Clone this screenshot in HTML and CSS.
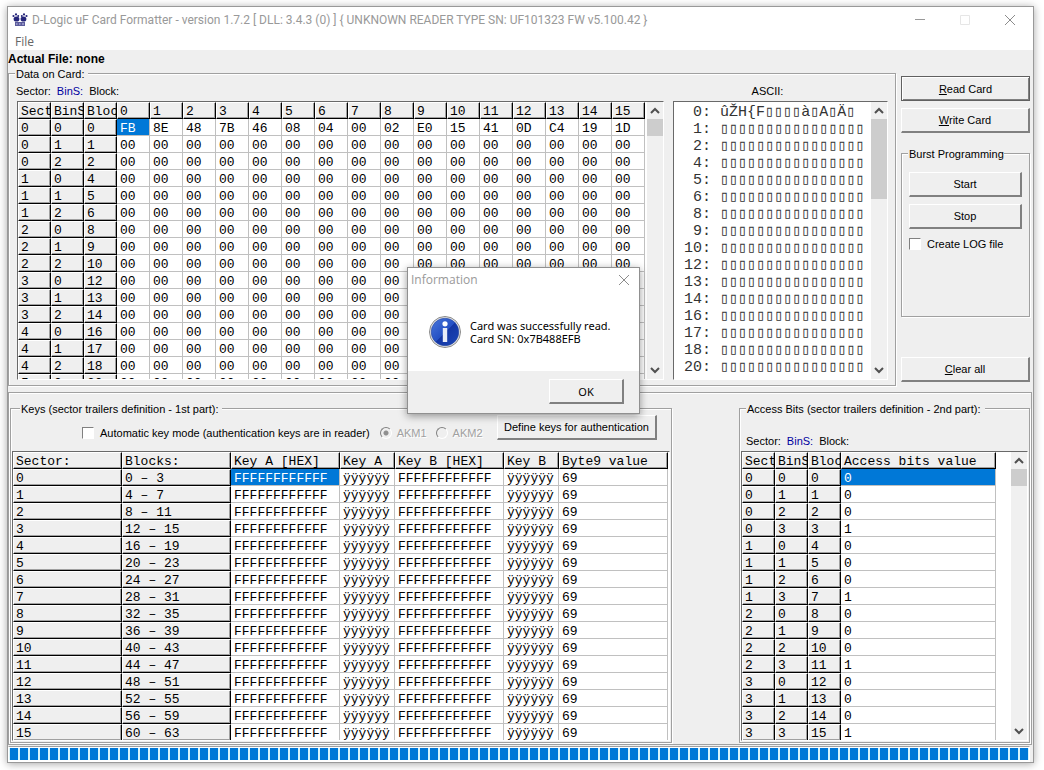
FILE: index.html
```html
<!DOCTYPE html>
<html lang="en">
<head>
<meta charset="utf-8">
<title>D-Logic uF Card Formatter</title>
<link rel="stylesheet" href="styles.css">
</head>
<body>
<div class="window">
  <header class="titlebar">
    <svg class="app-icon" width="16" height="14" viewBox="0 0 16 14" aria-hidden="true">
      <g fill="#25257a">
        <circle cx="1.500" cy="3" r="1.100"/><circle cx="4" cy="1.400" r="1.100"/><circle cx="6.200" cy="3" r="1"/>
        <circle cx="14.500" cy="3" r="1.100"/><circle cx="12" cy="1.400" r="1.100"/><circle cx="9.800" cy="3" r="1"/>
        <ellipse cx="4.500" cy="6" rx="2.900" ry="2.600"/><ellipse cx="11.500" cy="6" rx="2.900" ry="2.600"/>
        <path d="M3 9h10v4H3z" opacity=".75"/>
      </g>
      <path d="M4 11h1.500M7 11h1.500M10 11h2" stroke="#c8c8f0"/>
    </svg>
    <h1 class="title">D-Logic uF Card Formatter - version 1.7.2 [ DLL: 3.4.3 (0) ] { UNKNOWN READER TYPE SN: UF101323 FW v5.100.42 }</h1>
    <div class="caption-buttons">
      <button class="caption" aria-label="Minimize"><svg width="12" height="12"><path d="M1 5.500h10" stroke="#999"/></svg></button>
      <button class="caption" aria-label="Maximize" disabled><svg width="12" height="12"><path d="M1.500 1.500h9v9h-9z" fill="none" stroke="#e6e6e6"/></svg></button>
      <button class="caption" aria-label="Close"><svg width="12" height="12"><path d="M1 1l10 10M11 1L1 11" stroke="#8c8c8c"/></svg></button>
    </div>
  </header>
  <nav class="menu"><button class="menu-item">File</button></nav>

  <main class="client">
    <p class="file-name">Actual File: none</p>
    <div class="upper">
      <fieldset class="group data-group">
        <legend>Data on Card:</legend>
        <div class="captions">
          <div class="triple"><span>Sector:</span><span class="blue">BinS:</span><span>Block:</span></div>
          <div class="ascii-label">ASCII:</div>
        </div>
        <div class="views">
          <div class="view data-view">
            <div class="pane"><table class="grid" id="data"></table></div>
            <div class="scroll"></div>
          </div>
          <div class="view ascii-view">
            <pre class="ascii" id="ascii"></pre>
            <div class="scroll long"></div>
          </div>
        </div>
      </fieldset>
      <aside class="side">
        <button class="btn default"><u>R</u>ead Card</button>
        <button class="btn"><u>W</u>rite Card</button>
        <fieldset class="group burst">
          <legend>Burst Programming</legend>
          <button class="btn">Start</button>
          <button class="btn">Stop</button>
          <label class="check"><input type="checkbox"><span>Create LOG file</span></label>
        </fieldset>
        <button class="btn clear"><u>C</u>lear all</button>
      </aside>
    </div>

    <section class="lower">
      <fieldset class="group keys">
        <legend>Keys (sector trailers definition - 1st part):</legend>
        <div class="key-options">
          <label class="check"><input type="checkbox"><span>Automatic key mode (authentication keys are in reader)</span></label>
          <label class="check off akm"><input type="radio" name="akm" checked disabled><span>AKM1</span></label>
          <label class="check off"><input type="radio" name="akm" disabled><span>AKM2</span></label>
          <button class="btn define">Define keys for authentication</button>
        </div>
        <div class="view"><div class="pane"><table class="grid" id="keys"></table></div></div>
      </fieldset>
      <fieldset class="group access">
        <legend>Access Bits (sector trailers definition - 2nd part):</legend>
        <div class="triple"><span>Sector:</span><span class="blue">BinS:</span><span>Block:</span></div>
        <div class="view">
          <div class="pane"><table class="grid" id="access"></table></div>
          <div class="scroll"></div>
        </div>
      </fieldset>
    </section>
    <div class="progress" role="progressbar" aria-label="Progress" aria-valuenow="100"></div>
  </main>

  <section class="dialog" role="dialog" aria-labelledby="dialog-title">
    <div class="dialog-head">
      <h2 id="dialog-title">Information</h2>
      <button class="caption" aria-label="Close dialog"><svg width="12" height="12"><path d="M1 1l10 10M11 1L1 11" stroke="#8c8c8c"/></svg></button>
    </div>
    <div class="dialog-body">
      <svg width="34" height="34" viewBox="0 0 34 34" aria-hidden="true">
        <defs><linearGradient id="ball" x1="0" y1="0" x2="1" y2="1"><stop offset="0" stop-color="#4a78dc"/><stop offset=".5" stop-color="#2450c4"/><stop offset=".52" stop-color="#1436a4"/><stop offset="1" stop-color="#1c48b8"/></linearGradient></defs>
        <circle cx="17" cy="17" r="15.500" fill="#e8e8e8" stroke="#8a8a8a"/>
        <circle cx="17" cy="17" r="13.800" fill="url(#ball)" stroke="#2444a0" stroke-width=".6"/>
        <circle cx="17" cy="8.800" r="2.600" fill="#fff"/>
        <path d="M14.800 13h4.400v14h-4.400z" fill="#e8ecf8"/>
      </svg>
      <p>Card was successfully read.<br>Card SN: 0x7B488EFB</p>
    </div>
    <div class="dialog-foot"><button class="btn">OK</button></div>
  </section>
</div>
<script src="app.js"></script>
</body>
</html>
```
FILE: styles.css
```css
* { box-sizing: border-box; }
body {
  margin: 0;
  padding: 6px 10px 7px 7px;
  background: #fff;
  color: #000;
  font: 11px/14px "Liberation Sans", Arial, sans-serif;
}
h1, h2, p, pre { margin: 0; }
button, input { font: inherit; color: inherit; margin: 0; }

.window {
  position: relative;
  background: #efefef;
  border: 1px solid #999;
  box-shadow: 0 1px 8px rgba(0, 0, 0, .35);
}
.titlebar { display: flex; align-items: center; height: 25px; padding-left: 4px; background: #fff; }
.app-icon { flex: none; }
.title { flex: 1; margin-left: 4px; color: #999; font: 12px/24px Roboto, "Noto Sans", sans-serif; white-space: nowrap; }
.caption-buttons { display: flex; padding-right: 1px; }
.caption { display: grid; place-items: center; width: 45px; height: 24px; padding: 0; border: 0; background: none; }
.menu { height: 18px; padding-left: 7px; background: #fff; }
.menu-item { display: block; padding: 0; border: 0; background: none; color: #666; font: 12px/20px "Open Sans", "Noto Sans", sans-serif; }

.file-name { height: 16px; font-size: 12px; font-weight: bold; line-height: 18px; }
.group {
  min-width: 0;
  margin: 0;
  padding: 0;
  border: 1px solid #a0a0a0;
  box-shadow: inset 1px 1px #fff, 1px 1px #fff;
}
.group legend { margin-left: 6px; padding: 0 4px 0 1px; height: 14px; background: #efefef; line-height: 16px; }

.upper { display: flex; gap: 5px; padding-right: 3px; }
.data-group { flex: 1; height: 320px; }
.captions { display: flex; padding: 4px 8px 3px 7px; }
.triple { flex: 1; display: flex; gap: 6px; }
.blue { color: #0000a0; }
.ascii-label { width: 215px; padding-right: 24px; text-align: center; }
.views { display: flex; gap: 9px; padding: 0 7px 0 8px; }
.view {
  display: flex;
  background: #fff;
  border: 1px solid #fff;
  border-top-color: #696969;
  border-left-color: #696969;
}
.data-view { flex: 1; min-width: 0; height: 279px; }
.ascii-view { flex: none; width: 215px; height: 279px; }
.pane { flex: 1; min-width: 0; overflow: hidden; }
.ascii { flex: 1; padding: 2px 0 0 10px; overflow: hidden; color: #333; font: 15px/17px "Liberation Mono", "DejaVu Sans Mono", monospace; }

.grid { border-collapse: separate; border-spacing: 0; table-layout: fixed; font: 13px/13px "Liberation Mono", monospace; }
.grid th, .grid td {
  height: 17px;
  padding: 3px 0 0 3px;
  overflow: hidden;
  border: 0 solid #c0c0c0;
  border-width: 0 1px 1px 0;
  font-weight: normal;
  text-align: left;
  white-space: nowrap;
}
.grid th {
  padding: 2px 0 0 2px;
  border: 1px solid #000;
  border-top-color: #fff;
  border-left-color: #fff;
  background: #efefef;
  box-shadow: inset -1px -1px #a0a0a0;
}
.grid .picked { background: #0078d7; color: #fff; }
.w33 { width: 33px; }
.w55 { width: 55px; }
.w109 { width: 109px; }
.w155 { width: 155px; }

.scroll { flex: none; display: flex; flex-direction: column; width: 16px; background: #f0f0f0; }
.scroll svg { display: block; flex: none; }
.thumb { height: 17px; background: #cdcdcd; }
.long .thumb { height: 80px; }
.scroll .rest { flex: 1; }

.side { flex: none; display: flex; flex-direction: column; width: 129px; padding: 10px 0 4px; }
.btn {
  height: 25px;
  padding: 0 4px;
  border: 1px solid #fff;
  border-right: 2px solid #808080;
  border-bottom: 2px solid #808080;
  background: #efefef;
  text-align: center;
}
.default { border: 1px solid #606060; box-shadow: inset 1px 1px #fff, inset -1px -1px #808080; }
.side > .btn + .btn { margin-top: 7px; }
.burst { display: flex; flex-direction: column; height: 171px; margin-top: 13px; }
.burst legend { margin-left: 6px; padding-right: 0; }
.burst .btn { display: block; width: calc(100% - 14px); margin: 12px 7px 0; }
.burst .btn + .btn { margin-top: 7px; }
.burst .check { margin: 8px 7px 0; }
.side > .clear { margin-top: auto; }

.check { display: flex; align-items: center; gap: 6px; }
.check input {
  appearance: none;
  flex: none;
  width: 12px;
  height: 12px;
  border: 1px solid #fff;
  border-top-color: #808080;
  border-left-color: #808080;
  background: #fff;
}
.check input[type="radio"] { border-radius: 50%; background: #efefef; }
.check input[type="radio"]:checked { background: radial-gradient(#909090 2px, #efefef 3px); }
.off { gap: 5px; color: #a0a0a0; text-shadow: 1px 1px #fff; }

.lower {
  display: flex;
  justify-content: space-between;
  margin: 6px 1px 0 0;
  padding: 8px 1px 1px;
  border: 1px solid #a0a0a0;
  box-shadow: inset 1px 1px #fff;
}
.lower .view { height: 290px; }
.keys { width: 662px; padding: 0 1px 1px; }
.keys legend { margin-left: 8px; }
.access { width: 291px; padding: 0 1px 1px; }
.access legend { margin-left: 5px; }
.key-options { display: flex; align-items: center; height: 36px; padding: 0 13px 0 70px; }
.akm { margin-left: 10px; }
.akm + .check { margin-left: 9px; }
.key-options .define { width: 160px; margin-left: auto; margin-bottom: 12px; flex: none; }
.key-options .check { white-space: nowrap; }
.access .triple { padding: 19px 0 3px 5px; }
.progress {
  height: 16px;
  margin: 1px 3px 0 0;
  border: 1px solid #fff;
  border-top-color: #a0a0a0;
  background: repeating-linear-gradient(90deg, #0078d7 0 8px, #d8f4fc 8px 10px) 1px 0;
  box-shadow: inset 0 1px #fff, inset 0 -1px #fff;
}

.dialog {
  position: absolute;
  left: 399px;
  top: 260px;
  width: 233px;
  border: 1px solid #909090;
  background: #fff;
  box-shadow: 0 2px 8px rgba(0, 0, 0, .4);
  font: 11px/13px "Noto Sans", sans-serif;
}
.dialog-head { display: flex; justify-content: space-between; height: 25px; padding-left: 3px; }
.dialog-head h2 { color: #999; font: 12px/24px "Open Sans", sans-serif; }
.dialog-head .caption { width: 30px; }
.dialog-body { display: flex; align-items: center; gap: 8px; height: 78px; padding-left: 20px; white-space: nowrap; }
.dialog-foot { display: flex; justify-content: flex-end; padding: 8px 15px 9px; background: #efefef; }
.dialog-foot .btn { width: 75px; }
```
FILE: app.js
```js
const COLUMNS = {
  data: [["Sect", 33], ["BinS", 33], ["Bloc", 33], ...Array.from({ length: 16 }, (_, i) => [i, 33])],
  keys: [["Sector:", 109], ["Blocks:", 109], ["Key A [HEX]", 109], ["Key A", 55], ["Key B [HEX]", 109], ["Key B", 55], ["Byte9 value", 109]],
  access: [["Sect", 33], ["BinS", 33], ["Bloc", 33], ["Access bits value", 155]]
};
const FIRST_BLOCK = "FB 8E 48 7B 46 08 04 00 02 E0 15 41 0D C4 19 1D".split(" ");
const count = n => Array.from({ length: n }, (_, i) => i);

const dataRows = count(16).map(i => {
  const sector = Math.floor(i / 3), bin = i % 3;
  return [sector, bin, sector * 4 + bin, ...(i ? Array(16).fill("00") : FIRST_BLOCK)];
});
const keyRows = count(16).map(i => [i, `${i * 4} – ${i * 4 + 3}`, "FFFFFFFFFFFF", "ÿÿÿÿÿÿ", "FFFFFFFFFFFF", "ÿÿÿÿÿÿ", "69"]);
const accessRows = count(16).map(i => [Math.floor(i / 4), i % 4, i, i % 4 === 3 ? 1 : 0]);

function fill(id, rows, fixed) {
  const cols = COLUMNS[id];
  const table = document.getElementById(id);
  table.style.width = cols.reduce((sum, c) => sum + c[1], 0) + "px";
  table.innerHTML =
    "<thead><tr>" + cols.map(c => `<th scope="col" class="w${c[1]}">${c[0]}</th>`).join("") + "</tr></thead><tbody>" +
    rows.map((row, r) => "<tr>" + row.map((v, c) =>
      c < fixed ? `<th scope="row">${v}</th>` : `<td${r === 0 && c === fixed ? ' class="picked"' : ""}>${v}</td>`
    ).join("") + "</tr>").join("") + "</tbody>";
}
fill("data", dataRows, 3);
fill("keys", keyRows, 2);
fill("access", accessRows, 3);

document.getElementById("ascii").textContent = dataRows.map((row, i) =>
  String(row[2]).padStart(2) + ": " + (i ? "▯".repeat(16) : "ûŽH{F▯▯▯▯à▯A▯Ä▯")
).join("\n");

const arrow = d => `<svg width="16" height="17" aria-hidden="true"><path d="${d}" fill="none" stroke="#505050" stroke-width="2"/></svg>`;
document.querySelectorAll(".scroll").forEach(bar => {
  bar.innerHTML = arrow("M4 11l4-4 4 4") + '<div class="thumb"></div><div class="rest"></div>' + arrow("M4 6l4 4 4-4");
});
```
